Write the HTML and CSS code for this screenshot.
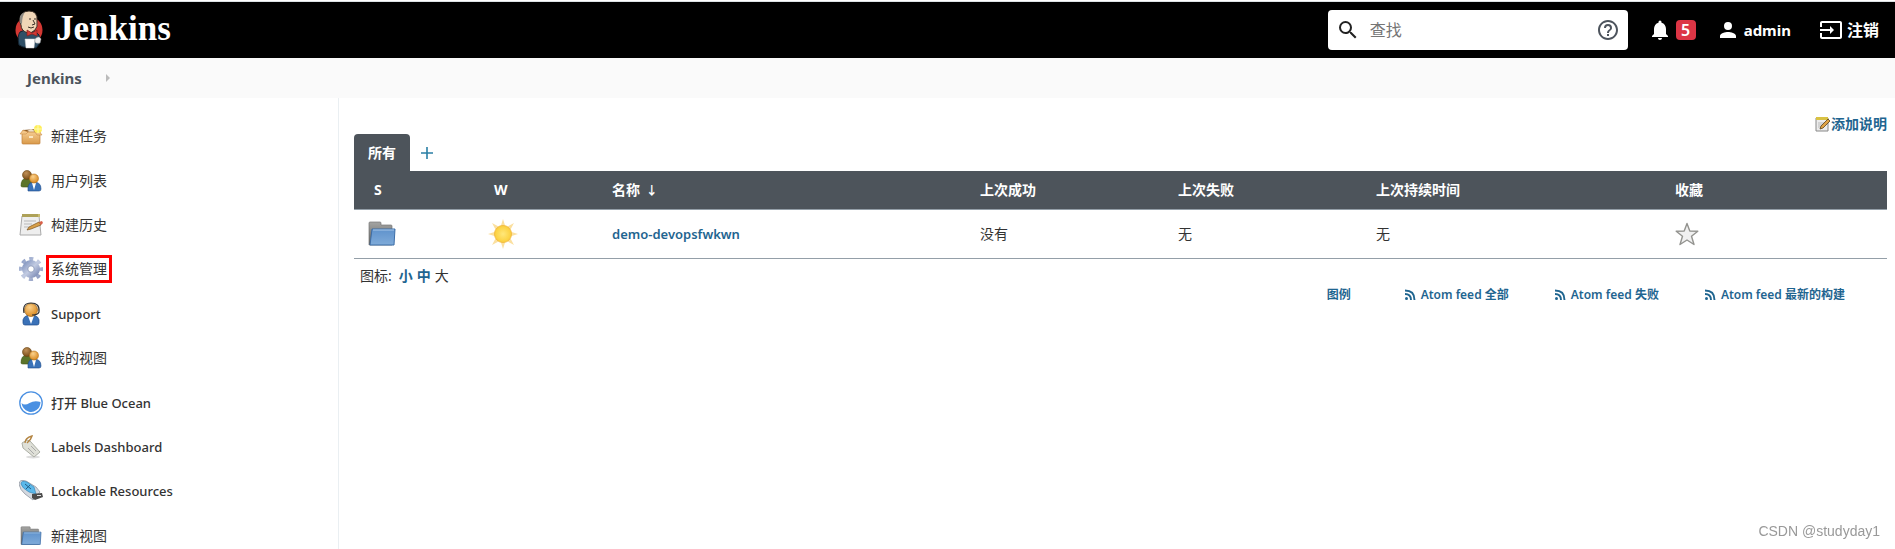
FILE: index.html
```
<!DOCTYPE html>
<html lang="zh-CN">
<head>
    <meta charset="UTF-8">
    <meta name="viewport" content="width=device-width, initial-scale=1.0">
    <title>Jenkins</title>
    <link rel="stylesheet" href="styles.css">
</head>
<body>
    <!-- shared icons -->
    <svg class="defs" width="0" height="0" aria-hidden="true">
        <defs>
            <linearGradient id="gBlue" x1="0" y1="0" x2="0" y2="1"><stop offset="0" stop-color="#5f92cc"/><stop offset="1" stop-color="#7fabd9"/></linearGradient>
            <linearGradient id="gGrey" x1="0" y1="0" x2="0" y2="1"><stop offset="0" stop-color="#a5a5a3"/><stop offset="1" stop-color="#5c5e5d"/></linearGradient>
            <radialGradient id="gFace" cx=".4" cy=".3" r=".7"><stop offset="0" stop-color="#fbd18c"/><stop offset="1" stop-color="#d98a22"/></radialGradient>
            <radialGradient id="gDark" cx=".4" cy=".3" r=".7"><stop offset="0" stop-color="#c09058"/><stop offset="1" stop-color="#7a4d17"/></radialGradient>
            <linearGradient id="gBox" x1="0" y1="0" x2="0" y2="1"><stop offset="0" stop-color="#f5cb8f"/><stop offset="1" stop-color="#d99a4a"/></linearGradient>
            <linearGradient id="gGear" x1="0" y1="0" x2="1" y2="1"><stop offset="0" stop-color="#8b9cc4"/><stop offset=".5" stop-color="#c2cbe2"/><stop offset="1" stop-color="#8593bb"/></linearGradient>
            <radialGradient id="gSun"><stop offset="0" stop-color="#ffe77a"/><stop offset="1" stop-color="#fbcf3a"/></radialGradient>
        </defs>
        <symbol id="folder" viewBox="0 0 28 26">
            <path d="M1 24V2q0-1 1-1h10q1 0 1 1v2h10q1 0 1 1v19z" fill="url(#gGrey)" stroke="#777" stroke-width=".7"/>
            <path d="M4 8h23l-1 16H2z" fill="url(#gBlue)" stroke="#3d6ea8"/>
            <path d="M5 9h21" stroke="#a9c8e8"/>
        </symbol>
        <symbol id="people" viewBox="0 0 24 24">
            <path d="M2 17q0-8 6-8t6 5v4H4q-2 0-2-1z" fill="#5b742a" stroke="#3f5515" stroke-width=".6"/>
            <circle cx="8" cy="6" r="4.5" fill="url(#gDark)" stroke="#6b4413" stroke-width=".6"/>
            <path d="M9 22q-1-9 6-9t7 7q0 2-2 2z" fill="#3a72b8" stroke="#1f4c8a" stroke-width=".6"/>
            <path d="M13 14l2 7 2-7z" fill="#fff"/>
            <circle cx="15" cy="9.500" r="4.500" fill="url(#gFace)" stroke="#b5701a" stroke-width=".6"/>
        </symbol>
        <symbol id="rss" viewBox="0 0 12 12">
            <circle cx="2.500" cy="9.500" r="1.500" fill="currentColor"/>
            <path d="M1 5q6 0 6 6M1 1.500q9.500 0 9.500 9.500" fill="none" stroke="currentColor" stroke-width="1.900"/>
        </symbol>
    </svg>

    <header class="page-header">
        <a class="brand" href="#">
            <svg width="30" height="40" viewBox="0 0 30 40" aria-hidden="true">
                <circle cx="15" cy="20" r="13.500" fill="#d33833"/>
                <path d="M5 35q-2-9 1-13l5-2 10 1 4 4 1 8-4 5-13-1z" fill="#2f4f66" stroke="#142533"/>
                <path d="M6 12Q6 1 15 1t8 10q1 6-2 9t-7 3q-7-2-7-8z" fill="#f0d6b7" stroke="#3b2f26"/>
                <path d="M6 13Q4 4 11 2q-3 4-3 12z" fill="#8f8b84"/>
                <path d="M15 9h2m3 0h2m-3 1 2 4-3 1m-4 2q3 2 6 0" fill="none" stroke="#3b2f26"/>
                <path d="M13 20l5 3 5-3v6l-5-2-5 2z" fill="#d33833" stroke="#81201c" stroke-width=".7"/>
                <path d="M11 29h10l-1 9h-8z" fill="#fff" stroke="#ccc" stroke-width=".5"/>
                <path d="M21 29q4-4 6 0l-1 4q-4 1-5-1z" fill="#eee" stroke="#999" stroke-width=".5"/>
            </svg>
            <span>Jenkins</span>
        </a>
        <form class="search">
            <svg width="24" height="24" viewBox="0 0 24 24" aria-hidden="true"><path fill="#222" d="M15.500 14h-.79l-.28-.27A6.470 6.470 0 0 0 16 9.500 6.500 6.500 0 1 0 9.500 16c1.610 0 3.090-.59 4.230-1.570l.27.28v.79l5 4.990L20.490 19l-4.990-5zm-6 0C7.010 14 5 11.990 5 9.500S7.010 5 9.500 5 14 7.010 14 9.500 11.990 14 9.500 14z"/></svg>
            <input type="text" placeholder="查找" aria-label="查找">
            <a href="#" aria-label="帮助"><svg width="24" height="24" viewBox="0 0 24 24"><path fill="#4d545d" d="M11 18h2v-2h-2v2zm1-16C6.480 2 2 6.480 2 12s4.480 10 10 10 10-4.480 10-10S17.520 2 12 2zm0 18c-4.410 0-8-3.590-8-8s3.590-8 8-8 8 3.590 8 8-3.590 8-8 8zm0-14a4 4 0 0 0-4 4h2c0-1.100.9-2 2-2s2 .9 2 2c0 2-3 1.750-3 5h2c0-2.250 3-2.500 3-5a4 4 0 0 0-4-4z"/></svg></a>
        </form>
        <a class="header-link alerts" href="#" aria-label="5 条通知">
            <svg width="24" height="24" viewBox="0 0 24 24"><path fill="#fff" d="M12 22c1.100 0 2-.9 2-2h-4c0 1.100.89 2 2 2zm6-6v-5c0-3.070-1.640-5.640-4.500-6.320V4a1.500 1.500 0 0 0-3 0v.68C7.630 5.360 6 7.920 6 11v5l-2 2v1h16v-1l-2-2z"/></svg>
            <span class="badge">5</span>
        </a>
        <a class="header-link user" href="#">
            <svg width="24" height="24" viewBox="0 0 24 24" aria-hidden="true"><path fill="#fff" d="M12 12a4 4 0 1 0 0-8 4 4 0 0 0 0 8zm0 2c-2.670 0-8 1.340-8 4v2h16v-2c0-2.660-5.330-4-8-4z"/></svg>
            <span>admin</span>
        </a>
        <a class="header-link logout" href="#">
            <svg width="24" height="24" viewBox="0 0 24 24" aria-hidden="true"><path fill="#fff" d="M21 3H3c-1.100 0-2 .9-2 2v4h2V5h18v14H3v-4H1v4c0 1.100.9 2 2 2h18c1.100 0 2-.9 2-2V5c0-1.100-.9-2-2-2zM11 16l4-4-4-4v3H1v2h10z"/></svg>
            <span>注销</span>
        </a>
    </header>

    <nav class="breadcrumbs">
        <a href="#">Jenkins</a>
        <span class="arrow"></span>
    </nav>

    <div class="page-body">
        <nav class="side-panel">
            <a class="task" href="#">
                <svg width="24" height="24" viewBox="0 0 24 24" aria-hidden="true"><path d="M4 6l14-1 3 4H3z" fill="#8a5a25"/><path d="M8 7l4-2 4 2-3 2z" fill="#eee0c8"/><path d="M3 8h18v11q0 1-1 1H4q-1 0-1-1z" fill="url(#gBox)" stroke="#c08038" stroke-width=".7"/><path d="M4 6L1 10h6l2-2zM20 7l3 4h-5l-2-3z" fill="#f3c688" stroke="#c08038" stroke-width=".5"/><path d="M10 12h4v2h-4z" fill="#fce7c2"/><circle cx="19" cy="5" r="4" fill="#ffef5a"/><path d="M19 1v8M15 5h8" stroke="#fff9b0"/></svg>
                <span>新建任务</span>
            </a>
            <a class="task" href="#">
                <svg width="24" height="24" aria-hidden="true"><use href="#people"/></svg>
                <span>用户列表</span>
            </a>
            <a class="task" href="#">
                <svg width="24" height="24" viewBox="0 0 24 24" aria-hidden="true"><path d="M3 3h17l2 19H1z" fill="#eee" stroke="#aaa"/><path d="M3 1h18v3H3z" fill="#c9bc70"/><path d="M4 1v3m2-3v3m2-3v3m2-3v3m2-3v3m2-3v3m2-3v3m2-3v3" stroke="#877a36" stroke-width=".8"/><path d="M5 8h12M5 11h8M5 14h5" stroke="#b9b9b9"/><path d="M8 17l2-3 10-5 2 3-10 4z" fill="#d9a04a" stroke="#7b531c" stroke-width=".7"/><path d="M20 9l3-1 1 2-2 2z" fill="#d9604a"/></svg>
                <span>构建历史</span>
            </a>
            <a class="task marked" href="#">
                <svg width="24" height="24" viewBox="0 0 24 24" aria-hidden="true"><circle cx="12" cy="12" r="10" fill="none" stroke="url(#gGear)" stroke-width="4" stroke-dasharray="4 3.850" stroke-dashoffset="2"/><circle cx="12" cy="12" r="6" fill="none" stroke="url(#gGear)" stroke-width="6"/><circle cx="12" cy="12" r="3.200" fill="#fff" stroke="#7382aa" stroke-width=".7"/></svg>
                <span>系统管理</span>
            </a>
            <a class="task latin" href="#">
                <svg width="24" height="24" viewBox="0 0 24 24" aria-hidden="true"><path d="M4 21q-1-8 8-8t8 8q0 2-2 2H6q-2 0-2-2z" fill="#3a72b8" stroke="#1f4c8a" stroke-width=".7"/><path d="M9 14l3 8 3-8z" fill="#fff"/><circle cx="12" cy="8" r="6.500" fill="url(#gFace)" stroke="#9b6214" stroke-width=".7"/><path d="M5 11Q3 1 12 1t8 9q-1 3-7 3" fill="none" stroke="#333" stroke-width="1.200"/></svg>
                <span>Support</span>
            </a>
            <a class="task" href="#">
                <svg width="24" height="24" aria-hidden="true"><use href="#people"/></svg>
                <span>我的视图</span>
            </a>
            <a class="task latin" href="#">
                <svg width="24" height="24" viewBox="0 0 24 24" aria-hidden="true"><circle cx="12" cy="12" r="11.200" fill="#fff" stroke="#4a90e2" stroke-width="1.300"/><path d="M2.500 12q3 3 8 0t11-1q0 5-4 8t-8 1.500q-6-2-7-8.500z" fill="#4a90e2"/></svg>
                <span>打开 Blue Ocean</span>
            </a>
            <a class="task latin" href="#">
                <svg width="24" height="24" viewBox="0 0 24 24" aria-hidden="true"><ellipse cx="14" cy="22" rx="7" ry="1.500" fill="#ddd"/><path d="M3 8l5-3 3 1 10 11-6 5L4 13z" fill="#dfe0d8" stroke="#adb0a6"/><path d="M9 13l6 6m-3-8 5 5" stroke="#aaa"/><path d="M6 8Q6 3 13 1q-1 4-5 7" fill="none" stroke="#b48543" stroke-width="1.400"/></svg>
                <span>Labels Dashboard</span>
            </a>
            <a class="task latin" href="#">
                <svg width="24" height="24" viewBox="0 0 24 24" aria-hidden="true"><path d="M0 5Q0 0 7 2l10 6 4 5-7 8-8-6Q1 11 0 5z" fill="#d3d8df" stroke="#8f969f" stroke-width=".8"/><path d="M2 5q0-4 6-2l7 5 2 7-7-2Q3 9 2 5z" fill="#5bb8ea" stroke="#2c7fb4" stroke-width=".6"/><path d="M6 5l6 5m-5 0 4-4" stroke="#246089"/><path d="M13 15l10-1 1 4-8 3-3-2z" fill="#4b4b4b"/><path d="M18 16h4v1h-4z" fill="#ddd"/></svg>
                <span>Lockable Resources</span>
            </a>
            <a class="task" href="#">
                <svg width="24" height="24" viewBox="0 0 24 24" aria-hidden="true"><use href="#folder" x="1" y="2" width="22" height="20"/></svg>
                <span>新建视图</span>
            </a>
        </nav>

        <main class="main-panel">
            <a class="description-link" href="#">
                <svg width="16" height="16" viewBox="0 0 16 16" aria-hidden="true"><path d="M1 2h12v13H1z" fill="#ececec" stroke="#888"/><path d="M1 1h12v3H1z" fill="#d9c244"/><path d="M3 7h7M3 9h5M3 11h3" stroke="#bbb"/><path d="M5 13l1-3 7-7 2 2-7 7z" fill="#e0a345" stroke="#5d431b" stroke-width=".8"/></svg><span>添加说明</span>
            </a>
            <div class="tab-bar">
                <a class="tab active" href="#">所有</a>
                <a class="add-tab" href="#" aria-label="新建视图"><svg width="12" height="12" viewBox="0 0 12 12"><path d="M6 0v12M0 6h12" stroke="#2a7fa5" stroke-width="1.600"/></svg></a>
            </div>
            <table class="projects">
                <colgroup>
                    <col class="col-status"><col class="col-weather"><col class="col-name"><col class="col-last"><col class="col-last"><col class="col-duration"><col>
                </colgroup>
                <thead>
                    <tr>
                        <th class="center">S</th>
                        <th class="center">W</th>
                        <th>名称 <span class="sort">↓</span></th>
                        <th>上次成功</th>
                        <th>上次失败</th>
                        <th>上次持续时间</th>
                        <th>收藏</th>
                    </tr>
                </thead>
                <tbody>
                    <tr>
                        <td><svg width="28" height="26" aria-label="文件夹"><use href="#folder"/></svg></td>
                        <td><svg width="30" height="30" viewBox="0 0 30 30" aria-label="晴"><path d="M15 0l2.500 8h-5zM15 30l2.500-8h-5zM0 15l8-2.500v5zM30 15l-8-2.500v5zM4 4l7.500 4L8 11.500zM26 4l-7.500 4 3.500 3.500zM4 26l7.500-4L8 18.500zM26 26l-7.500-4 3.500-3.500z" fill="#fbe0a0"/><circle cx="15" cy="15" r="8.500" fill="url(#gSun)" stroke="#f3bd45"/></svg></td>
                        <td><a href="#">demo-devopsfwkwn</a></td>
                        <td>没有</td>
                        <td>无</td>
                        <td>无</td>
                        <td><svg width="24" height="24" viewBox="0 0 24 24" aria-label="收藏"><path d="M12 1.500l2.800 7.500 8 .3-6.300 5 2.500 8.200-7-4.500-7 4.500 2.500-8.200-6.300-5 8-.3z" fill="#f0f0f0" stroke="#93938f" stroke-width="1.400" stroke-linejoin="round"/></svg></td>
                    </tr>
                </tbody>
            </table>
            <div class="icon-sizes">
                <span>图标:</span>
                <a href="#">小</a>
                <a href="#">中</a>
                <span>大</span>
            </div>
            <div class="feeds">
                <a class="legend" href="#">图例</a>
                <a href="#"><svg width="12" height="12" aria-hidden="true"><use href="#rss"/></svg>Atom feed 全部</a>
                <a href="#"><svg width="12" height="12" aria-hidden="true"><use href="#rss"/></svg>Atom feed 失败</a>
                <a href="#"><svg width="12" height="12" aria-hidden="true"><use href="#rss"/></svg>Atom feed 最新的构建</a>
            </div>
        </main>
    </div>
    <div class="watermark">CSDN @studyday1</div>
</body>
</html>
```

FILE: styles.css
```
* {
    box-sizing: border-box;
}
body {
    margin: 0;
    padding-top: 1px;
    height: 100vh;
    display: flex;
    flex-direction: column;
    font-family: "Noto Sans", "Noto Sans CJK SC", sans-serif;
    font-size: 14px;
    line-height: 20px;
    color: #333;
    background: #fff;
}
svg {
    display: block;
    flex: none;
}
a {
    color: #1f6590;
    text-decoration: none;
}
.defs {
    position: absolute;
}

/* header */
.page-header {
    display: flex;
    flex: none;
    align-items: center;
    height: 57px;
    padding: 0 16px 0 14px;
    border-top: 1px solid #dce1e4;
    background: #000;
}
.brand {
    display: flex;
    align-items: center;
    gap: 12px;
    margin-right: auto;
    font-family: "Liberation Serif", serif;
    font-size: 35px;
    font-weight: bold;
    line-height: 40px;
    color: #fff;
}
.brand span {
    padding-bottom: 2px;
}
.search {
    display: flex;
    align-items: center;
    width: 300px;
    height: 40px;
    padding: 0 8px;
    border-radius: 4px;
    background: #fff;
}
.search input {
    flex: 1;
    min-width: 0;
    padding: 0 10px;
    border: 0;
    outline: 0;
    font: inherit;
    font-size: 16px;
}
.search input::placeholder {
    color: #757575;
}
.header-link {
    display: flex;
    align-items: center;
    gap: 4px;
    color: #fff;
    font-size: 16px;
    font-weight: 600;
}
.alerts {
    margin-left: 20px;
}
.badge {
    width: 20px;
    border-radius: 4px;
    background: #dc3545;
    text-align: center;
}
.user {
    margin-left: 20px;
    font-size: 15px;
    font-weight: 700;
}
.logout {
    margin-left: 28px;
}

/* breadcrumbs */
.breadcrumbs {
    display: flex;
    flex: none;
    align-items: center;
    gap: 24px;
    height: 40px;
    padding-left: 27px;
    background: #fafafa;
}
.breadcrumbs a {
    color: #4d545d;
    font-size: 15px;
    font-weight: 700;
}
.arrow {
    border: 4px solid transparent;
    border-left-color: #bbb;
}

/* side panel */
.page-body {
    display: flex;
    flex: 1;
    min-height: 0;
    overflow: hidden;
}
.side-panel {
    display: grid;
    grid-auto-rows: 1fr;
    align-self: flex-start;
    flex: none;
    width: 339px;
    min-height: 460px;
    padding: 16px 0 0 19px;
    border-right: 1px solid #eaeff2;
}
.task {
    display: flex;
    align-items: center;
    gap: 3px;
    color: #333;
}
.task span {
    padding: 1px 2px;
    border: 3px solid transparent;
}
.task.latin {
    font-size: 13px;
    font-weight: 500;
}
.task.marked span {
    border-color: #f00;
}

/* main panel */
.main-panel {
    flex: 1;
    padding: 16px 8px 0 15px;
}
.description-link {
    display: flex;
    align-items: center;
    justify-content: flex-end;
    font-weight: 600;
}
.tab-bar {
    display: flex;
    align-items: center;
    height: 37px;
}
.tab {
    height: 37px;
    padding: 0 14px;
    border-radius: 4px 4px 0 0;
    background: #4d545b;
    color: #fff;
    font-weight: 700;
    line-height: 37px;
}
.add-tab {
    padding: 12px 11px;
}
.projects {
    width: 100%;
    table-layout: fixed;
    border-spacing: 0;
}
.projects th {
    height: 39px;
    padding: 0 14px;
    border-bottom: 1px solid #949fa8;
    background: #4d545b;
    color: #fff;
    font-weight: 700;
    text-align: left;
}
.projects th.center {
    padding-left: 20px;
}
.projects td {
    height: 49px;
    padding: 0 14px;
    border-bottom: 1px solid #949fa8;
}
.projects td a {
    font-size: 13px;
    font-weight: 600;
}
.sort {
    margin-left: 2px;
    font-size: 12px;
}
.col-status {
    width: 120px;
}
.col-weather {
    width: 124px;
}
.col-name {
    width: 24%;
}
.col-last {
    width: 198px;
}
.col-duration {
    width: 299px;
}
.icon-sizes {
    display: flex;
    gap: 4px;
    padding: 7px 6px 0;
}
.icon-sizes a {
    font-weight: 600;
}
.icon-sizes span:first-child {
    margin-right: 3px;
}
.feeds {
    display: flex;
    justify-content: flex-end;
    gap: 45px;
    padding-right: 42px;
    font-size: 12px;
    font-weight: 600;
    line-height: 18px;
}
.feeds a {
    display: flex;
    align-items: center;
    gap: 5px;
}
.feeds .legend {
    margin-right: 8px;
}

.watermark {
    position: fixed;
    right: 15px;
    bottom: 8px;
    font-family: "Liberation Sans", sans-serif;
    color: #999;
}
```
